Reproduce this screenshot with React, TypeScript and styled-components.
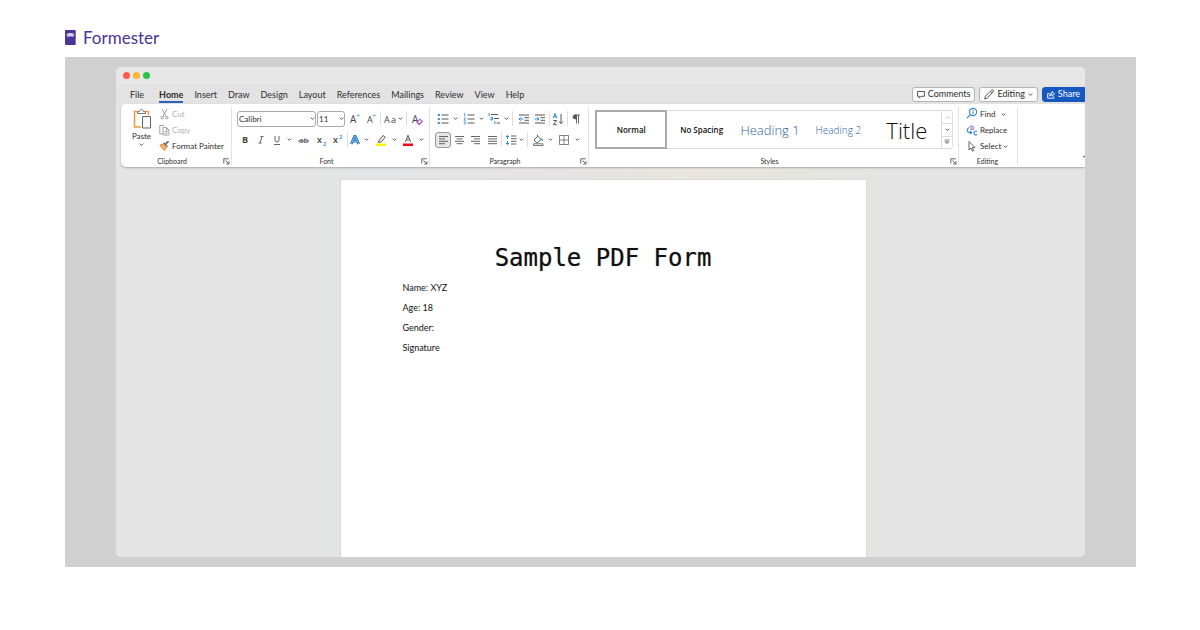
import React from "react";
import styled, { createGlobalStyle } from "styled-components";

const GlobalStyle = createGlobalStyle`
  * { box-sizing: border-box; }
  body {
    margin: 0;
    background: #fff;
    color: #2e2e2e;
    font: 9px/12px Lato, "Open Sans", sans-serif;
  }
  button, select {
    font: inherit;
    color: inherit;
    background: none;
    border: 0;
    padding: 0;
    margin: 0;
  }
  svg { display: block; flex: none; }
`;

const Page = styled.div`
  padding: 27px 64px 63px 65px;
`;
const Brand = styled.a`
  display: flex;
  align-items: center;
  gap: 7px;
  height: 21px;
  margin-bottom: 9px;
  color: #4b3596;
  font: 400 17px/21px Lato, sans-serif;
  text-decoration: none;
`;
const Stage = styled.main`
  padding: 10px 51px;
  background: #d0d0d0;
`;
const Window = styled.section`
  overflow: hidden;
  border-radius: 5px;
  background: #e4e4e4;
`;
const TitleBar = styled.div`
  display: flex;
  align-items: center;
  gap: 3px;
  height: 17px;
  padding-left: 7px;
  background: #e7e7e7;
`;
const Dot = styled.span<{ $color: string }>`
  width: 7px;
  height: 7px;
  border-radius: 50%;
  background: ${(p) => p.$color};
`;
const TabBar = styled.nav`
  display: flex;
  align-items: center;
  gap: 4px;
  height: 20px;
  padding-left: 14px;
  background: #e4e3e3;
`;
const Tabs = styled.div`
  display: flex;
  flex: 1;
  gap: 11px;
`;
const Tab = styled.button<{ $active?: boolean; $wide?: boolean }>`
  height: 17px;
  padding-top: 3px;
  margin-right: ${(p) => (p.$wide ? 4 : 0)}px;
  border-bottom: 2px solid ${(p) => (p.$active ? "#2f64b5" : "transparent")};
  font-weight: ${(p) => (p.$active ? 700 : 400)};
`;
const ActionButton = styled.button<{ $primary?: boolean }>`
  display: flex;
  align-items: center;
  gap: 3px;
  height: 15px;
  padding: 0 4px;
  border: 1px solid ${(p) => (p.$primary ? "#1658c0" : "#b4b4b4")};
  border-radius: ${(p) => (p.$primary ? "3px 0 0 3px" : "3px")};
  background: ${(p) => (p.$primary ? "#1658c0" : "#fcfcfc")};
  color: ${(p) => (p.$primary ? "#fff" : "#2e2e2e")};
`;
const Ribbon = styled.div`
  position: relative;
  display: flex;
  height: 63px;
  margin-left: 5px;
  padding: 3px 0 2px;
  border-radius: 5px 0 0 5px;
  background: #fff;
  box-shadow: 0 1px 2px #aaa;
`;
const Group = styled.section<{ $w?: number }>`
  display: flex;
  flex-direction: column;
  ${(p) => (p.$w ? `width: ${p.$w}px;` : "flex: 1;")}
  border-right: 1px solid #e2e2e2;
  font-size: 8px;
`;
const GroupBody = styled.div<{ $pad: number }>`
  flex: 1;
  padding: 1px 0 0 ${(p) => p.$pad}px;
`;
const GroupFooter = styled.footer`
  display: flex;
  align-items: center;
  height: 10px;
  margin-bottom: -1px;
  padding-right: 1px;
  font-size: 7px;
  line-height: 10px;
  text-align: center;
`;
const GroupName = styled.span`
  flex: 1;
`;
const ToolRow = styled.div`
  display: flex;
  align-items: center;
  height: 21px;
`;
const Tool = styled.button<{ $w: number; $on?: boolean }>`
  display: flex;
  align-items: center;
  justify-content: center;
  flex: none;
  width: ${(p) => p.$w}px;
  height: 16px;
  border-radius: 3px;
  ${(p) => (p.$on ? "background: #e6e6e6; border: 1px solid #9a9a9a;" : "")}
`;
const Divider = styled.span<{ $w: number }>`
  display: flex;
  justify-content: center;
  flex: none;
  width: ${(p) => p.$w}px;
  height: 15px;
  &::before {
    content: "";
    width: 1px;
    background: #e0e0e0;
  }
`;
const Combo = styled.label<{ $w: number }>`
  display: grid;
  flex: none;
  align-items: center;
  width: ${(p) => p.$w}px;
  height: 16px;
  margin-right: 1px;
  border: 1px solid #a9a9a9;
  border-radius: 3px;
  & > * { grid-area: 1 / 1; }
  & > svg { justify-self: end; pointer-events: none; }
`;
const ComboSelect = styled.select`
  appearance: none;
  width: 100%;
  height: 14px;
  padding-left: 1px;
  outline: 0;
`;
const ClipboardTools = styled.div`
  display: flex;
  gap: 7px;
`;
const PasteButton = styled.button`
  display: flex;
  flex-direction: column;
  align-items: center;
  width: 21px;
  height: 46px;
  line-height: 12px;
`;
const CommandList = styled.div`
  display: flex;
  flex-direction: column;
  align-items: flex-start;
  margin-top: -2px;
`;
const Command = styled.button<{ $off?: boolean }>`
  display: flex;
  align-items: center;
  gap: 2px;
  height: 16px;
  white-space: nowrap;
  color: ${(p) => (p.$off ? "#b0b0b0" : "#2e2e2e")};
`;
const Gallery = styled.div`
  display: flex;
  height: 39px;
  margin: 2px 5px 0 0;
  border: 1px solid #dcdcdc;
  border-radius: 3px;
`;
const cardFont = {
  body: '600 8px/12px "Open Sans", sans-serif',
  h1: '300 13px/20px "Open Sans", sans-serif',
  h2: '300 10px/16px "Open Sans", sans-serif',
  title: '300 22px/30px "Open Sans", sans-serif',
};
const StyleCard = styled.button<{ $on?: boolean; $kind?: keyof typeof cardFont }>`
  flex: 1 1 0;
  min-width: 0;
  margin: ${(p) => (p.$on ? "-1px 0 -1px -1px" : "0")};
  border: ${(p) => (p.$on ? "2px solid #ababab" : "0")};
  white-space: nowrap;
  font: ${(p) => cardFont[p.$kind || "body"]};
  color: ${(p) => (p.$kind === "h1" || p.$kind === "h2" ? "#2f5da6" : "#111")};
`;
const GalleryScroll = styled.div`
  display: grid;
  grid-template-rows: repeat(3, 1fr);
  width: 11px;
  border-left: 1px solid #dcdcdc;
`;
const ScrollButton = styled.button`
  display: grid;
  place-items: center;
  &:not(:first-child) { border-top: 1px solid #dcdcdc; }
`;
const RibbonEnd = styled.div`
  display: flex;
  align-items: flex-end;
  justify-content: flex-end;
  width: 67px;
  padding-bottom: 7px;
`;
const Workspace = styled.div`
  padding: 12px 0 0 5px;
  background: linear-gradient(90deg, #e4e4e4 15%, #e3e4e5 28%, #e6e3e4 46%, #e9e5de 60%, #e4e5e0 72%, #e3e4e3 80%, #e4e4e4 92%);
`;
const Paper = styled.article`
  width: 100%;
  max-width: 527px;
  min-height: 378px;
  margin: 0 auto;
  padding: 64px 62px 0;
  border: 1px solid #dadada;
  border-bottom: 0;
  background: #fff;
  color: #111;
`;
const DocTitle = styled.h1`
  margin: 0 0 6px;
  text-align: center;
  white-space: nowrap;
  font: 400 24px/28px "DejaVu Sans Mono", monospace;
  text-shadow: 0 0 1px #888;
`;
const DocLine = styled.p`
  margin: 0;
  font: 400 9px/20px Lato, sans-serif;
`;

const BLUE = "#2b88d0";
const INK = "#555";

const Chevron = ({ color = "#444", up = false }: { color?: string; up?: boolean }) => (
  <svg width="5" height="5" viewBox="0 0 5 5" fill="none" stroke={color} strokeWidth=".9">
    <path d={up ? "M.7 3.4 2.5 1.8l1.8 1.6" : "M.7 1.7l1.8 1.6 1.8-1.6"} />
  </svg>
);

const Launcher = () => (
  <svg width="7" height="7" viewBox="0 0 7 7" fill="none" stroke="#555" strokeWidth=".9">
    <path d="M.8 5.5V.8h5M2.5 2.5l3.4 3.4M6 3.2V6H3.2" />
  </svg>
);

const Glyph = ({ children, w = 12, h = 14 }: { children: React.ReactNode; w?: number; h?: number }) => (
  <svg width={w} height={h} viewBox={`0 0 ${w} ${h}`} fill="none" stroke={INK} strokeWidth="1" fontFamily="Open Sans, sans-serif">
    {children}
  </svg>
);

const Letter = ({ x, y, size, color = "#444", weight = 400, children }: {
  x: number; y: number; size: number; color?: string; weight?: number; children: string;
}) => (
  <text x={x} y={y} fontSize={size} fill={color} stroke="none" fontWeight={weight}>{children}</text>
);

const Caret = ({ w }: { w: number }) => (
  <Tool $w={w} aria-label="More options"><Chevron /></Tool>
);

const Footer = ({ name, launcher = true }: { name: string; launcher?: boolean }) => (
  <GroupFooter>
    <GroupName>{name}</GroupName>
    {launcher && <Launcher />}
  </GroupFooter>
);

const AlignIcon = ({ d }: { d: string }) => (
  <Glyph w={11} h={12}><path d={d} strokeWidth=".9" /></Glyph>
);

const tabs = ["File", "Home", "Insert", "Draw", "Design", "Layout", "References", "Mailings", "Review", "View", "Help"];

const ClipboardGroup = () => (
  <Group $w={111}>
    <GroupBody $pad={10}>
      <ClipboardTools>
        <PasteButton>
          <svg width="20" height="22" viewBox="0 0 20 22" fill="none">
            <path d="M6 3.5H2.5V19H9M13 3.5h3.5V7" stroke="#eb9a3e" strokeWidth="1.5" />
            <path d="M5.500 5.500V3.600h2c.300-1.500 1-2.300 2-2.300s1.700.800 2 2.300h2v1.900z" fill="#fff" stroke="#777" />
            <path d="M10.500 8.500h8v11.500h-8z" fill="#fafafa" stroke="#666" />
          </svg>
          Paste
          <Chevron />
        </PasteButton>
        <CommandList>
          <Command $off>
            <Glyph w={11}><path d="M3 2l4 7.500M8 2L4 9.500" stroke="#999" /><circle cx="3.200" cy="10.600" r="1.200" stroke="#999" /><circle cx="7.800" cy="10.600" r="1.200" stroke="#999" /></Glyph>
            Cut
          </Command>
          <Command $off>
            <Glyph w={11}><path d="M4 11H.800V2.500H5M4 4.500h3.500L10 7v5H4zM7.500 4.500V7H10M5.500 8.500h3M5.500 10.200h3" stroke="#999" strokeWidth=".9" /></Glyph>
            Copy
          </Command>
          <Command>
            <Glyph w={11}><path d="M9.600 2.200L6.700 4.900" strokeWidth="1.500" /><path d="M4.500 3.800l4 3.800" strokeWidth="1.300" /><path d="M4 5L.800 6.200l4.400 5.300 2.600-3z" fill="#f0a04a" stroke="#d9822b" strokeWidth=".8" /><path d="M3 8l1.800-1.200M4.500 9.800l1.500-1.600" stroke="#fff" strokeWidth=".7" /></Glyph>
            Format Painter
          </Command>
        </CommandList>
      </ClipboardTools>
    </GroupBody>
    <Footer name="Clipboard" />
  </Group>
);

const FontGroup = () => (
  <Group $w={198}>
    <GroupBody $pad={5}>
      <ToolRow>
        <Combo $w={79}>
          <ComboSelect aria-label="Font"><option>Calibri</option></ComboSelect>
          <Chevron />
        </Combo>
        <Combo $w={28}>
          <ComboSelect aria-label="Font size"><option>11</option></ComboSelect>
          <Chevron />
        </Combo>
        <Tool $w={17} aria-label="Grow font">
          <Glyph><Letter x={1} y={10.5} size={10}>A</Letter><path d="M8 4.200l1.300-1.400 1.300 1.400" stroke={BLUE} /></Glyph>
        </Tool>
        <Tool $w={16} aria-label="Shrink font">
          <Glyph><Letter x={2} y={10.5} size={9}>A</Letter><path d="M8 2.800l1.300 1.400 1.300-1.400" stroke={BLUE} /></Glyph>
        </Tool>
        <Divider $w={3} />
        <Tool $w={15} aria-label="Change case"><Glyph w={13}><Letter x={1} y={10.5} size={9}>A</Letter><Letter x={8} y={10.5} size={9}>a</Letter></Glyph></Tool>
        <Caret w={7} />
        <Divider $w={4} />
        <Tool $w={18} aria-label="Clear formatting">
          <Glyph><Letter x={1} y={11} size={10}>A</Letter><path d="M6 10.200l3-3 2.200 2.200-3 3z" fill="#fff" stroke="#a347ba" strokeWidth="1.100" /></Glyph>
        </Tool>
      </ToolRow>
      <ToolRow>
        <Tool $w={16} aria-label="Bold"><Glyph><Letter x={3} y={10} size={9} weight={700}>B</Letter></Glyph></Tool>
        <Tool $w={16} aria-label="Italic"><Glyph><path d="M5.500 3.500h3M3.500 10h3M7 3.500L5 10" strokeWidth=".9" /></Glyph></Tool>
        <Tool $w={16} aria-label="Underline"><Glyph><path d="M4 3v4a2 2 0 0 0 4 0V3M3 11.500h6" strokeWidth=".9" /></Glyph></Tool>
        <Caret w={9} />
        <Tool $w={20} aria-label="Strikethrough"><Glyph><Letter x={1} y={10} size={8}>ab</Letter><path d="M0 8h11" strokeWidth=".9" /></Glyph></Tool>
        <Tool $w={16} aria-label="Subscript"><Glyph><Letter x={1} y={10} size={9} weight={600}>x</Letter><Letter x={7} y={13} size={6} color={BLUE} weight={600}>2</Letter></Glyph></Tool>
        <Tool $w={16} aria-label="Superscript"><Glyph><Letter x={1} y={10} size={9} weight={600}>x</Letter><Letter x={7} y={6} size={6} color={BLUE} weight={600}>2</Letter></Glyph></Tool>
        <Divider $w={2} />
        <Tool $w={14} aria-label="Text effects"><Glyph><path d="M2.200 11L5.600 3.200h.8L9.800 11M3.800 8.300h4.400" stroke="#1f6fbd" strokeWidth="2.600" /><path d="M2.200 11L5.600 3.200h.8L9.800 11M3.800 8.300h4.400" stroke="#9cc9ee" strokeWidth=".8" /></Glyph></Tool>
        <Caret w={8} />
        <Tool $w={21} aria-label="Highlight colour"><Glyph><path d="M4 7.800l4-5.300 2.200 1.700-4 4.800-2.500.3zM4 7.800L2.800 9.500" /><path d="M1 11.700h10" stroke="#fff200" strokeWidth="2.600" /></Glyph></Tool>
        <Caret w={7} />
        <Tool $w={20} aria-label="Font colour"><Glyph><path d="M3.400 9L6 2.300 8.600 9M4.300 6.800h3.400" /><path d="M1 11.700h10" stroke="#f30d12" strokeWidth="2.600" /></Glyph></Tool>
        <Caret w={6} />
      </ToolRow>
    </GroupBody>
    <Footer name="Font" />
  </Group>
);

const ParagraphGroup = () => (
  <Group $w={159}>
    <GroupBody $pad={5}>
      <ToolRow>
        <Tool $w={16} aria-label="Bullets"><Glyph><path d="M4.500 3h7M4.500 7h7M4.500 11h7" /><path d="M.800 3h2M.800 7h2M.800 11h2" stroke={BLUE} strokeWidth="2" /></Glyph></Tool>
        <Caret w={9} />
        <Tool $w={17} aria-label="Numbering"><Glyph><path d="M4.500 3h7M4.500 7h7M4.500 11h7" /><path d="M.800 2l1-.500v3M.800 6h1.400v1L.800 8.200h1.700M.800 9.800h1.500V12H.800" stroke={BLUE} strokeWidth=".8" /></Glyph></Tool>
        <Caret w={8} />
        <Tool $w={18} aria-label="Multilevel list"><Glyph><path d="M3 2.500h7M6 6.500h5M8.500 11h3.500" /><path d="M.500 2l.800-.500v2.500M3 5.500h1.500V8H3zM6 9.700h1V12" stroke={BLUE} strokeWidth=".9" /></Glyph></Tool>
        <Caret w={7} />
        <Divider $w={5} />
        <Tool $w={17} aria-label="Decrease indent"><Glyph><path d="M1 3h10M6.500 5.700h4.500M6.500 8.300h4.500M1 11h10" /><path d="M5.300 7H1M2.700 5.300L1 7l1.700 1.700" stroke={BLUE} /></Glyph></Tool>
        <Tool $w={16} aria-label="Increase indent"><Glyph><path d="M1 3h10M6.500 5.700h4.500M6.500 8.300h4.500M1 11h10" /><path d="M.500 7h4.500M3.300 5.300L5 7 3.300 8.700" stroke={BLUE} /></Glyph></Tool>
        <Divider $w={2} />
        <Tool $w={16} aria-label="Sort"><Glyph><path d="M1.200 6.200L3 1.500l1.800 4.700M1.800 4.700h2.400" stroke={BLUE} /><path d="M1.300 8.500h3.400L1.300 12.700h3.600M9 2v9.500M7 9.500l2 2.200 2-2.200" /></Glyph></Tool>
        <Divider $w={2} />
        <Tool $w={16} aria-label="Show marks"><Glyph><path d="M6.500 3H5a1.900 1.900 0 0 0 0 3.800h1.500z" fill={INK} /><path d="M6.500 3v8.500M8.500 3v8.500M5 3h5" strokeWidth=".9" /></Glyph></Tool>
      </ToolRow>
      <ToolRow>
        <Tool $w={16} $on aria-label="Align left"><AlignIcon d="M1 2.500h9M1 4.900h6M1 7.300h9M1 9.700h6" /></Tool>
        <Tool $w={16} aria-label="Centre"><AlignIcon d="M1 2.500h9M2.500 4.900h6M1 7.300h9M2.500 9.700h6" /></Tool>
        <Tool $w={17} aria-label="Align right"><AlignIcon d="M1 2.500h9M4 4.900h6M1 7.300h9M4 9.700h6" /></Tool>
        <Tool $w={16} aria-label="Justify"><AlignIcon d="M1 2.500h9M1 4.900h9M1 7.300h9M1 9.700h9" /></Tool>
        <Divider $w={3} />
        <Tool $w={15} aria-label="Line spacing"><Glyph><path d="M6 3h5.500M6 5.700h5.500M6 8.300h5.500M6 11h5.500" strokeWidth=".9" /><path d="M2.500 2.500v3.500M2.500 8v3.500M1 4l1.500-1.600L4 4M1 10l1.500 1.600L4 10" stroke={BLUE} /></Glyph></Tool>
        <Caret w={7} />
        <Divider $w={5} />
        <Tool $w={16} aria-label="Shading"><Glyph><path d="M2 7l3.800-3.800L9.200 6.600 5.600 9.500H4.200zM5.500 3.500V1.800" /><path d="M9.500 5.500l1.200 2.200" stroke={BLUE} strokeWidth="1.300" /><path d="M1.500 10.800h9.500v1.700H1.500z" strokeWidth=".8" /></Glyph></Tool>
        <Caret w={8} />
        <Tool $w={20} aria-label="Borders"><Glyph><path d="M1.500 2.500h9v9h-9zM6 2.500v9M1.500 7h9" stroke="#777" strokeWidth=".9" /></Glyph></Tool>
        <Caret w={6} />
      </ToolRow>
    </GroupBody>
    <Footer name="Paragraph" />
  </Group>
);

const StylesGroup = () => (
  <Group>
    <GroupBody $pad={6}>
      <Gallery>
        <StyleCard $on>Normal</StyleCard>
        <StyleCard>No Spacing</StyleCard>
        <StyleCard $kind="h1">Heading 1</StyleCard>
        <StyleCard $kind="h2">Heading 2</StyleCard>
        <StyleCard $kind="title">Title</StyleCard>
        <GalleryScroll>
          <ScrollButton aria-label="Previous styles"><Chevron up color="#bbb" /></ScrollButton>
          <ScrollButton aria-label="Next styles"><Chevron /></ScrollButton>
          <ScrollButton aria-label="All styles">
            <svg width="6" height="6" viewBox="0 0 6 6" fill="none" stroke="#666" strokeWidth=".8"><path d="M.500 1h5M1 2.800l2 1.800 2-1.800z" /></svg>
          </ScrollButton>
        </GalleryScroll>
      </Gallery>
    </GroupBody>
    <Footer name="Styles" />
  </Group>
);

const EditingGroup = () => (
  <Group $w={59}>
    <GroupBody $pad={7}>
      <CommandList>
        <Command>
          <Glyph><circle cx="7" cy="5" r="3.600" stroke={BLUE} strokeWidth="1.100" /><path d="M4.300 7.700L1 11M7 4.500v2.300M7 2.800v.900" stroke={BLUE} strokeWidth="1.100" /></Glyph>
          Find&nbsp;&nbsp;<Chevron />
        </Command>
        <Command>
          <Glyph><Letter x={4} y={6.5} size={7} color="#a347ba" weight={600}>b</Letter><path d="M11 8.500a1.900 1.900 0 1 0 0 3" stroke={BLUE} strokeWidth="1.100" /><path d="M3.500 4.500C.500 5 .500 9.500 3 9.500h2.500M4 7.800l1.700 1.700L4 11.200" stroke={BLUE} strokeWidth="1.100" /></Glyph>
          Replace
        </Command>
        <Command>
          <Glyph><path d="M3 2.500v8.500l2-2 1.500 3.200 1.200-.600L6.300 8.500H9z" strokeWidth=".9" /></Glyph>
          Select<Chevron />
        </Command>
      </CommandList>
    </GroupBody>
    <Footer name="Editing" launcher={false} />
  </Group>
);

export default function App() {
  return (
    <Page>
      <GlobalStyle />
      <header>
        <Brand href="#">
          <svg width="11" height="15" viewBox="0 0 11 15">
            <rect width="10.700" height="15" rx=".8" fill="#4b3596" />
            <path d="M3.400 3.200a1.800 1.800 0 1 0 0 3.600q1.100 0 1.950-.800.850.800 1.950.800a1.800 1.800 0 0 0 0-3.600z" fill="#f1eef9" />
            <path d="M2.500 5.200q.900-1 1.800 0M6.400 5.200q.900-1 1.800 0" fill="none" stroke="#4b3596" strokeWidth=".8" />
          </svg>
          Formester
        </Brand>
      </header>
      <Stage>
        <Window>
          <TitleBar>
            <Dot $color="#ff5b52" />
            <Dot $color="#fdb62e" />
            <Dot $color="#27c644" />
          </TitleBar>
          <TabBar>
            <Tabs>
              {tabs.map((name) => (
                <Tab key={name} $active={name === "Home"} $wide={name === "File"}>{name}</Tab>
              ))}
            </Tabs>
            <ActionButton>
              <svg width="8" height="9" viewBox="0 0 8 9" fill="none" stroke="#444" strokeWidth=".9"><path d="M.600 1.500h6.800v4.800H4L2.200 8V6.300H.600z" /></svg>
              Comments
            </ActionButton>
            <ActionButton>
              <svg width="10" height="11" viewBox="0 0 10 11" fill="none" stroke="#444" strokeWidth=".9"><path d="M.700 10l.700-2.800L7.500 1.200q1-.700 1.600 0 .700.700 0 1.600L3.200 9.200zM6.500 2.300l1.600 1.600" /></svg>
              Editing
              <Chevron />
            </ActionButton>
            <ActionButton $primary>
              <svg width="8" height="9" viewBox="0 0 8 9" fill="none" stroke="#fff" strokeWidth=".9"><path d="M2.500 3.500H.700v4.700h6.200V6.500M2.500 6q.300-2.500 2.500-2.700V1.500l2.600 2.400L5 6.200V4.600Q3.500 4.700 2.500 6z" /></svg>
              Share
            </ActionButton>
          </TabBar>
          <Ribbon>
            <ClipboardGroup />
            <FontGroup />
            <ParagraphGroup />
            <StylesGroup />
            <EditingGroup />
            <RibbonEnd>
              <svg width="2" height="3" viewBox="0 0 2 3"><path d="M0 2l2-1" stroke="#444" /></svg>
            </RibbonEnd>
          </Ribbon>
          <Workspace>
            <Paper>
              <DocTitle>Sample PDF Form</DocTitle>
              <DocLine>Name: XYZ</DocLine>
              <DocLine>Age: 18</DocLine>
              <DocLine>Gender:</DocLine>
              <DocLine>Signature</DocLine>
            </Paper>
          </Workspace>
        </Window>
      </Stage>
    </Page>
  );
}
